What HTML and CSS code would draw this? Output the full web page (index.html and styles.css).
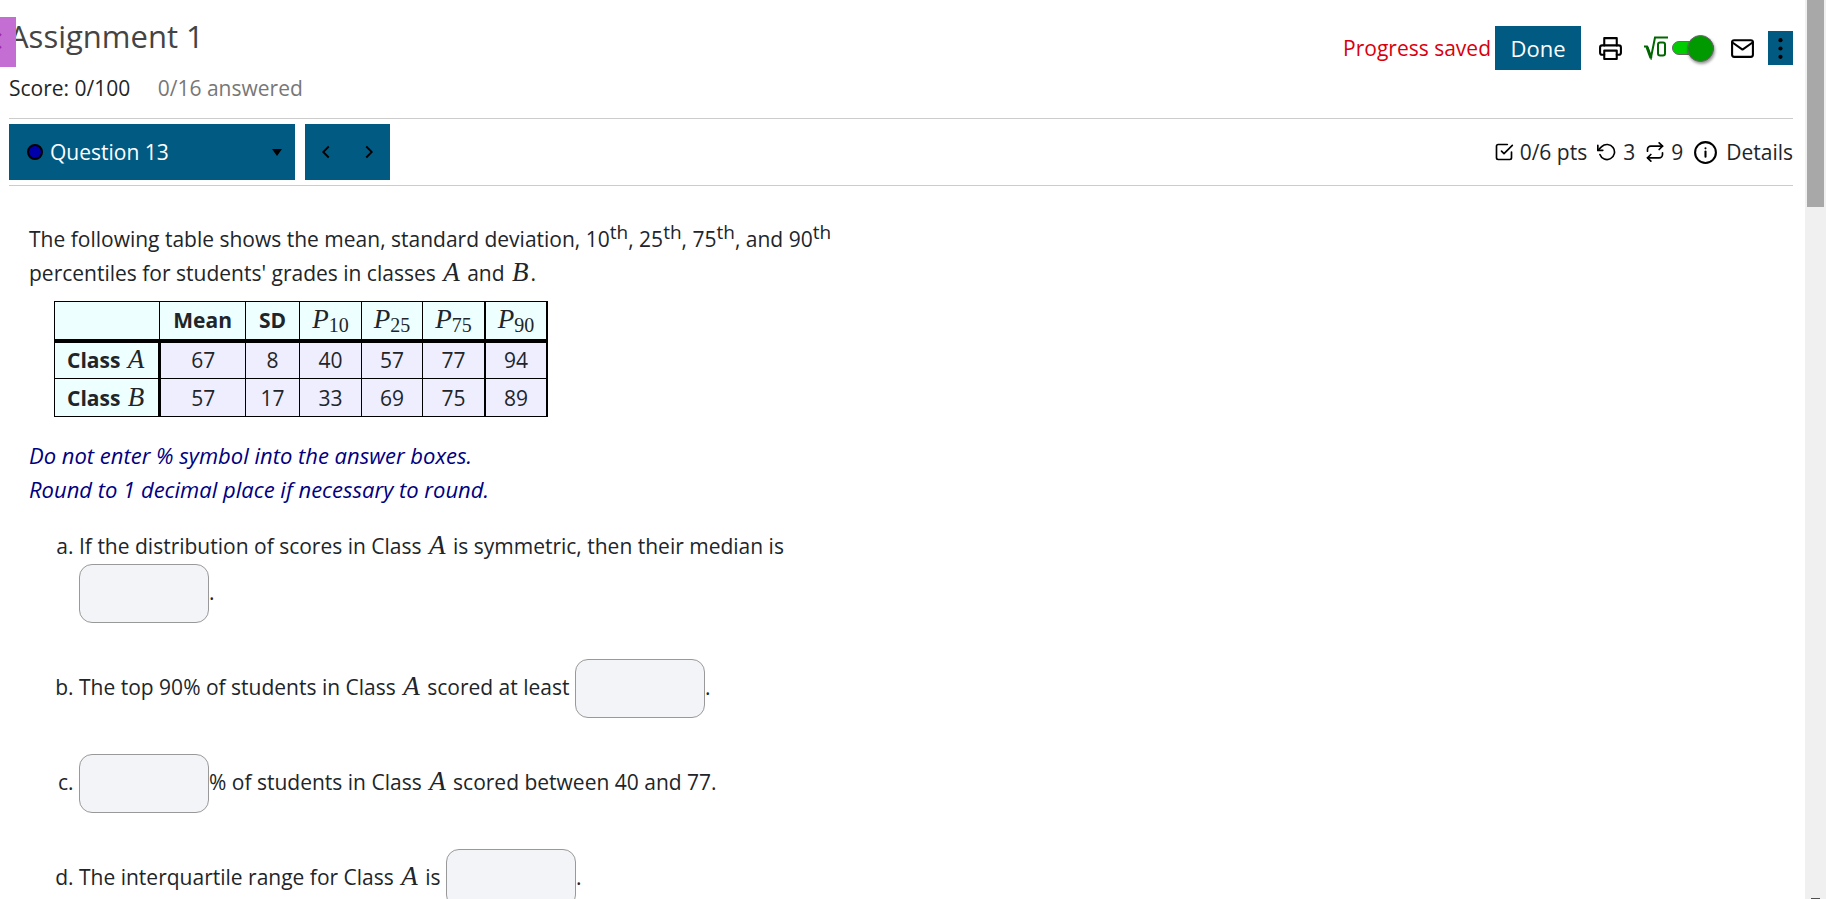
FILE: index.html
```html
<!DOCTYPE html>
<html lang="en">
<head>
  <meta charset="UTF-8">
  <meta name="viewport" content="width=device-width, initial-scale=1.0">
  <title>Assignment 1</title>
  <link rel="stylesheet" href="styles.css">
</head>
<body>

<button class="drawer-tab" aria-label="Open menu">
  <svg width="16" height="50" viewBox="0 0 16 50"><path d="M1 17 L-6 24 L1 31" /></svg>
</button>

<div class="page">

  <!-- HEADER -->
  <header class="header">
    <div>
      <h1>Assignment 1</h1>
      <p class="score">Score: 0/100 <span class="answered">0/16 answered</span></p>
    </div>
    <div class="tools">
      <span class="saved">Progress saved</span>
      <button class="btn done">Done</button>
      <button class="icon-btn print" aria-label="Print">
        <svg class="icon" width="25" height="25" viewBox="0 0 24 24"><polyline points="6 9 6 2 18 2 18 9"/><path d="M6 18H4a2 2 0 0 1-2-2v-5a2 2 0 0 1 2-2h16a2 2 0 0 1 2 2v5a2 2 0 0 1-2 2h-2"/><rect x="6" y="14" width="12" height="8"/></svg>
      </button>
      <label class="math-toggle">
        <svg width="24" height="24" viewBox="0 0 24 24"><path d="M0 10.500h3l4 11L11 1.500h13" /><path d="M3 11l4 11" stroke-width="3"/><rect x="14" y="6.500" width="7" height="13" rx="2"/></svg>
        <input type="checkbox" class="switch" aria-label="Equation editor" checked>
      </label>
      <button class="icon-btn" aria-label="Send message">
        <svg class="icon" width="25" height="25" viewBox="0 0 24 24"><path d="M4 4h16c1.100 0 2 .9 2 2v12c0 1.100-.9 2-2 2H4c-1.100 0-2-.9-2-2V6c0-1.100.9-2 2-2z"/><polyline points="22 6 12 13 2 6"/></svg>
      </button>
      <button class="btn more" aria-label="More options">
        <svg width="25" height="25" viewBox="0 0 24 24"><circle cx="12" cy="4" r="2"/><circle cx="12" cy="12" r="2"/><circle cx="12" cy="20" r="2"/></svg>
      </button>
    </div>
  </header>

  <!-- QUESTION BAR -->
  <nav class="question-bar">
    <button class="btn question-select" aria-haspopup="listbox">
      <span class="dot"></span>
      <span>Question 13</span>
      <span class="caret"></span>
    </button>
    <div class="pager">
      <button class="btn" aria-label="Previous question"><svg width="22" height="22" viewBox="0 0 24 24"><polyline points="15 18 9 12 15 6"/></svg></button>
      <button class="btn" aria-label="Next question"><svg width="22" height="22" viewBox="0 0 24 24"><polyline points="9 18 15 12 9 6"/></svg></button>
    </div>
    <div class="info">
      <svg class="icon" width="20" height="20" viewBox="0 0 24 24"><polyline points="9 11 12 14 22 4"/><path d="M21 12v7a2 2 0 0 1-2 2H5a2 2 0 0 1-2-2V5a2 2 0 0 1 2-2h11"/></svg>
      <span>0/6 pts</span>
      <svg class="icon" width="20" height="20" viewBox="0 0 24 24"><polyline points="1 4 1 10 7 10"/><path d="M3.510 15a9 9 0 1 0 2.130-9.360L1 10"/></svg>
      <span>3</span>
      <svg class="icon" width="20" height="20" viewBox="0 0 24 24"><polyline points="17 1 21 5 17 9"/><path d="M3 11V9a4 4 0 0 1 4-4h14"/><polyline points="7 23 3 19 7 15"/><path d="M21 13v2a4 4 0 0 1-4 4H3"/></svg>
      <span>9</span>
      <button class="details">
        <svg class="icon" width="25" height="25" viewBox="0 0 24 24"><circle cx="12" cy="12" r="10"/><line x1="12" y1="16" x2="12" y2="11"/><line x1="12" y1="8" x2="12" y2="8"/></svg>
        Details
      </button>
    </div>
  </nav>

  <!-- QUESTION -->
  <main class="question">
    <p>The following table shows the mean, standard deviation, 10<sup>th</sup>, 25<sup>th</sup>, 75<sup>th</sup>, and 90<sup>th</sup><br>
    percentiles for students' grades in classes <i class="math">A</i> and <i class="math">B</i>.</p>

    <table class="stats">
      <thead>
        <tr>
          <td></td>
          <th scope="col">Mean</th>
          <th scope="col">SD</th>
          <th scope="col" class="pct"><i class="math">P</i><sub>10</sub></th>
          <th scope="col" class="pct"><i class="math">P</i><sub>25</sub></th>
          <th scope="col" class="pct"><i class="math">P</i><sub>75</sub></th>
          <th scope="col" class="pct"><i class="math">P</i><sub>90</sub></th>
        </tr>
      </thead>
      <tbody>
        <tr><th scope="row">Class <i class="math">A</i></th><td>67</td><td>8</td><td>40</td><td>57</td><td>77</td><td>94</td></tr>
        <tr><th scope="row">Class <i class="math">B</i></th><td>57</td><td>17</td><td>33</td><td>69</td><td>75</td><td>89</td></tr>
      </tbody>
    </table>

    <p class="note">Do not enter % symbol into the answer boxes.<br>
    Round to 1 decimal place if necessary to round.</p>

    <ol class="parts">
      <li>If the distribution of scores in Class <i class="math">A</i> is symmetric, then their median is<br><input type="text" aria-label="Part a, median">.</li>
      <li>The top 90% of students in Class <i class="math">A</i> scored at least <input type="text" aria-label="Part b, score">.</li>
      <li><input type="text" aria-label="Part c, percent">% of students in Class <i class="math">A</i> scored between 40 and 77.</li>
      <li>The interquartile range for Class <i class="math">A</i> is <input type="text" aria-label="Part d, interquartile range">.</li>
    </ol>
  </main>
</div>

<div class="scrollbar"><div class="thumb"></div><div class="arrow"></div></div>

</body>
</html>
```
FILE: styles.css
```css
* { box-sizing: border-box; }
html, body { height: 100%; }
body {
  margin: 0;
  overflow: hidden;
  background: #fff;
  color: #212529;
  font-family: "Open Sans", "Noto Sans", sans-serif;
  font-size: 21px;
  line-height: 34px;
}
p, h1 { margin: 0; }
button { font: inherit; color: inherit; border: 0; padding: 0; background: none; cursor: pointer; }
svg { display: block; fill: none; stroke: #000; stroke-width: 2; }

.page { height: 100%; overflow: hidden; padding: 0 33px 0 9px; }
.icon { stroke-linecap: round; stroke-linejoin: round; flex: none; }
.btn { background: #005a82; color: #fff; }

/* purple tab over the left edge */
.drawer-tab { position: absolute; left: 0; top: 17px; width: 16px; height: 50px; background: #c46dd3; }
.drawer-tab svg { stroke: #9c27b0; }

/* HEADER */
.header { display: flex; justify-content: space-between; height: 119px; border-bottom: 1px solid #ccc; }
h1 { margin-top: 16px; font-size: 31px; line-height: 40px; font-weight: 400; color: #444; }
.score { margin-top: 15px; color: #212529; }
.answered { margin-left: 22px; color: #777; }
.tools { display: flex; align-items: center; height: 96px; }
.saved { margin-right: 4px; color: #d9000d; }
.done { width: 86px; height: 44px; margin-right: 17px; font-size: 22px; }
.print { margin-right: 21px; }
.math-toggle { display: flex; align-items: center; margin-right: 16px; }
.math-toggle svg { stroke: #060; margin-right: 4px; }
.switch {
  appearance: none;
  position: relative;
  width: 42px;
  height: 14px;
  margin: 0;
  border: 1px solid #666;
  border-radius: 7px;
  background: #0c0;
}
.switch::after {
  content: "";
  position: absolute;
  right: -1px;
  top: -7px;
  width: 25px;
  height: 25px;
  border: 1px solid #666;
  border-radius: 50%;
  background: #090;
  box-shadow: 1px 2px 3px rgba(0, 0, 0, 0.4);
}
.more { width: 25px; height: 34px; margin-left: 13px; }
.more svg { fill: #000; stroke: none; }

/* QUESTION BAR */
.question-bar { display: flex; align-items: center; height: 67px; border-bottom: 1px solid #ccc; }
.question-select { display: flex; align-items: center; width: 286px; height: 56px; padding: 0 13px 0 18px; margin-right: 10px; }
.dot { width: 16px; height: 16px; margin-right: 7px; border: 2px solid #000; border-radius: 50%; background: #00a; }
.caret { margin-left: auto; border: 5px solid transparent; border-top: 7px solid #000; border-bottom: 0; }
.pager { display: flex; width: 85px; height: 56px; }
.pager .btn { flex: 1; display: flex; align-items: center; justify-content: center; }
.info { display: flex; align-items: center; gap: 6px; margin-left: auto; }
.info span { margin-right: 4px; }
.details { display: flex; align-items: center; gap: 8px; }

/* QUESTION */
.question { padding: 36px 20px; }
sup { font-size: 19px; line-height: 0; vertical-align: 8px; }
.math { margin: 0 2px; font: italic 27px/24px "Liberation Serif", serif; }

.stats { margin: 11px 0 21px 25px; border-collapse: collapse; text-align: center; }
.stats th, .stats td { height: 38px; padding: 0 13px; border: 1px solid #000; background: #eef; }
.stats th, .stats thead td { background: #eff; }
.stats thead th, .stats thead td { height: 39px; border-bottom: 4px solid #000; }
.stats tbody th { padding: 0 12px; border-right: 3px solid #000; }
.stats th:last-child, .stats td:last-child { border-left: 2px solid #000; border-right: 2px solid #000; }
.stats .pct { padding: 0 12px; font-weight: 400; }
.pct .math { margin: 0; }
sub { font: 20px/20px "Liberation Serif", serif; vertical-align: -4px; }

.note { color: #000080; font-size: 22px; font-style: italic; }
.parts { margin: 22px 0 0; padding-left: 50px; list-style: lower-alpha; line-height: 36px; }
.parts li { margin-bottom: 36px; }
.parts input {
  width: 130px;
  height: 59px;
  padding: 0 12px;
  border: 1px solid #999;
  border-radius: 13px;
  background: #f3f4f7;
  font: inherit;
  vertical-align: -2px;
}

/* SCROLLBAR */
.scrollbar { position: fixed; top: 0; right: 0; bottom: 0; width: 21px; background: #f0f0f0; }
.thumb { width: 17px; height: 207px; margin-left: 2px; background: #a8a8a8; }
.arrow { position: absolute; left: 6px; bottom: 0; width: 9px; height: 1px; background: #505050; }
```
